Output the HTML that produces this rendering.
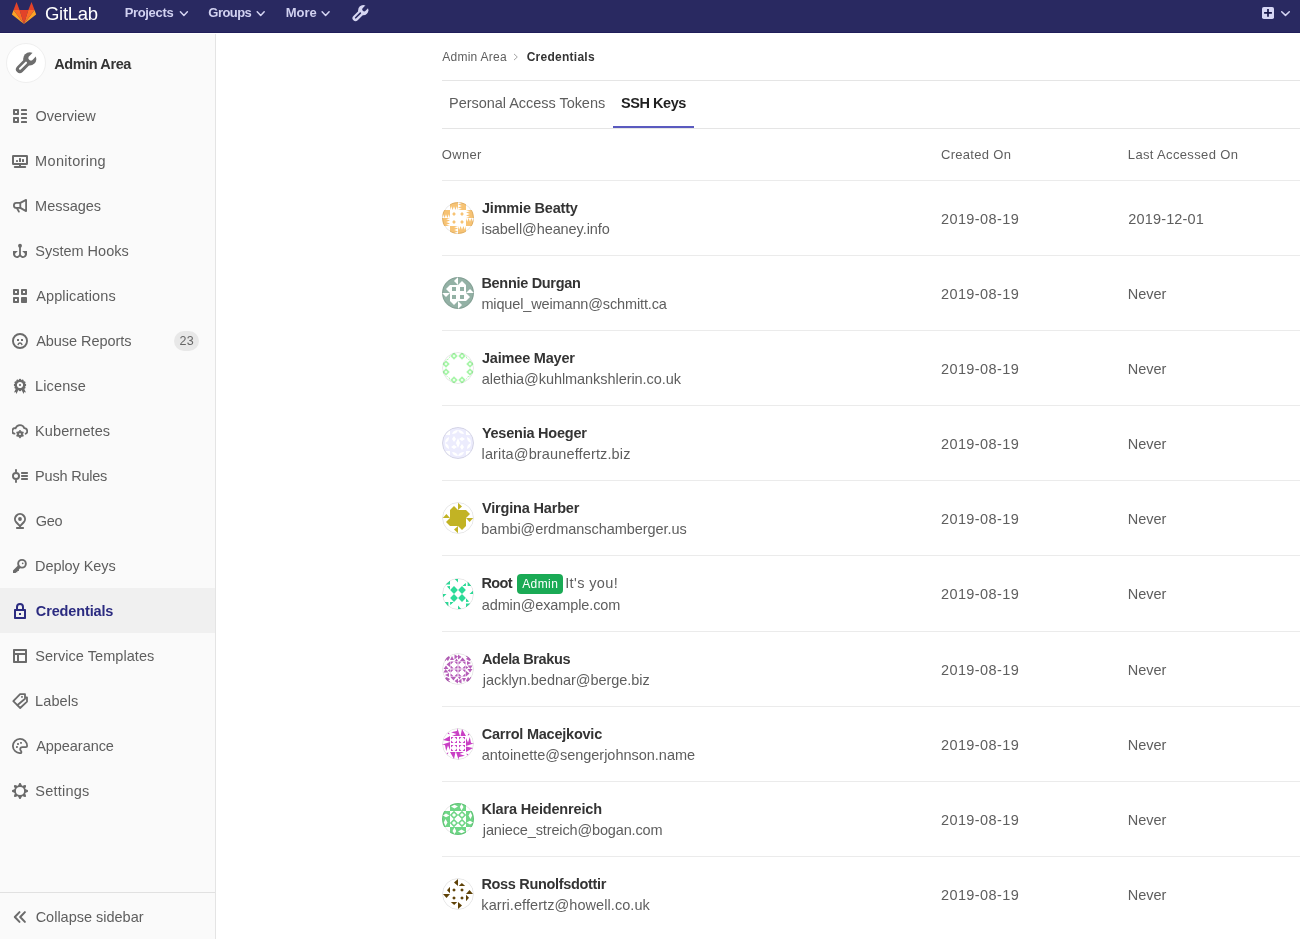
<!DOCTYPE html>
<html>
<head>
<meta charset="utf-8">
<title>Credentials · Admin Area · GitLab</title>
<style>
*{box-sizing:border-box;margin:0;padding:0}
html,body{width:1300px;height:940px;overflow:hidden;background:#fff}
body{font-family:"Liberation Sans",sans-serif;font-size:14px;color:#2e2e2e;position:relative}
#page{position:absolute;left:0;top:0;width:1300px;height:940px;will-change:transform}
.t{position:absolute;white-space:nowrap;line-height:20px}
.abs,.navbar,.sidebar,.hl,.row svg,.item,.item svg{position:absolute}
.navbar{left:0;top:0;width:1300px;height:33px;background:#292961;border-bottom:1px solid #201e5a}
.navbar svg{position:absolute}
.sidebar{left:0;top:34px;width:216px;height:905px;background:#fafafa;border-right:1px solid #e4e4e4}
.ctxav{position:absolute;left:6px;top:43px;width:40px;height:40px;border-radius:50%;background:#fff;border:1px solid #efefef}
.ctxav svg{position:absolute;left:7px;top:7px;color:#6e6e6e;fill:#6e6e6e}
.item{left:0;width:215px;height:45px;color:#6b6b6b}
.item svg{left:12px;top:15px;width:16px;height:16px;fill:currentColor}
.item.active{background:#f0f0f0;color:#2b2b80}
.pill{position:absolute;left:174px;top:331px;width:25px;height:20px;border-radius:10px;background:#e8e8e8}
.hl{height:1px;background:#e5e5e5}
.ul{position:absolute;left:613px;top:126px;width:81px;height:2px;background:#5a5abf}
.avt{position:absolute;left:442px;width:32px;height:32px;border-radius:50%;overflow:hidden}
.avt:after{content:"";box-sizing:border-box;position:absolute;left:0;top:0;width:32px;height:32px;border-radius:50%;border:1px solid rgba(0,0,0,.1)}
.avt svg{display:block}
.admin{position:absolute;left:517px;top:574px;width:46px;height:20px;border-radius:4px;background:#1aaa55}
</style>
</head>
<body>
<div id="page">
<div class="navbar">
<svg style="left:0;top:0" width="48" height="33" viewBox="0 0 48 33"><path fill="#e24329" d="M16.530 1.920L13.500 10.050H19.570zM31.530 1.920L28.340 10.050H34.570zM19.570 10.050H28.340L23.970 24.100z"/><path fill="#fc6d26" d="M13.500 10.050H19.570L23.970 24.100zM28.340 10.050H34.570L23.970 24.100z"/><path fill="#fca326" d="M11.900 14.520L13.500 10.050 23.970 24.100zM36.160 14.520L34.570 10.050 23.970 24.100z"/></svg>
<svg style="left:0;top:0" width="1300" height="33"><g fill="none" stroke="#d4d4f2" stroke-width="1.500" stroke-linecap="round" stroke-linejoin="round"><path d="M180.4 11.7L183.9 15.4 187.4 11.7"/><path d="M257.2 11.7L260.7 15.4 264.2 11.7"/><path d="M322.1 11.7L325.6 15.4 329.1 11.7"/><path d="M1281.7 11.7L1285.5 15.4 1289.3 11.7"/></g><rect x="1262" y="7" width="12" height="12" rx="1.800" fill="#d6d6f4"/><path d="M1264.100 12.050h7.800v1.700h-7.800zM1267.150 9h1.700v7.800h-1.700z" fill="#17174a"/></svg>
<svg style="left:350.700px;top:3.800px;color:#d6d6f2;fill:#d6d6f2" width="18.700" height="18.700" viewBox="0 0 16 16"><circle cx="10.500" cy="5.300" r="4.400"/><path d="M9.300 6.700L3.900 12.100" stroke="currentColor" stroke-width="5.200" stroke-linecap="round" fill="none"/><path d="M11.300 4.600L15.500 .400" stroke="#292961" stroke-width="3.300" stroke-linecap="round" fill="none"/><path d="M8 7.800L4 11.800" stroke="#292961" stroke-width="1.400" stroke-linecap="round" fill="none"/></svg>
</div>
<span class="t" id="brand" style="left:44.99px;top:4.29px;font-size:18.5px;color:#ffffff;letter-spacing:-0.29px">GitLab</span>
<span class="t" id="n1" style="left:124.63px;top:2.5px;font-size:13px;color:#d1d1f0;font-weight:bold;letter-spacing:-0.33px">Projects</span>
<span class="t" id="n2" style="left:208.35px;top:2.5px;font-size:13px;color:#d1d1f0;font-weight:bold;letter-spacing:-0.55px">Groups</span>
<span class="t" id="n3" style="left:285.7px;top:2.5px;font-size:13px;color:#d1d1f0;font-weight:bold;letter-spacing:0.01px">More</span>
<div class="sidebar"></div>
<div class="ctxav"><svg width="24" height="24" viewBox="0 0 16 16"><circle cx="10.500" cy="5.300" r="4.400"/><path d="M9.300 6.700L3.900 12.100" stroke="currentColor" stroke-width="5.200" stroke-linecap="round" fill="none"/><path d="M11.300 4.600L15.500 .400" stroke="#fff" stroke-width="3.300" stroke-linecap="round" fill="none"/><path d="M8 7.800L4 11.800" stroke="#fff" stroke-width="1.400" stroke-linecap="round" fill="none"/></svg></div>
<span class="t" id="ctx" style="left:54.14px;top:53.98px;font-size:14.5px;color:#343434;font-weight:bold;letter-spacing:-0.4px">Admin Area</span>
<div class="item" style="top:93px"><svg viewBox="0 0 16 16"><path fill-rule="evenodd" d="M1.8 1h4.4a.8.8 0 0 1 .8.8v4.4a.8.8 0 0 1-.8.8h-4.4a.8.8 0 0 1-.8-.8v-4.4a.8.8 0 0 1 .8-.8zM3 3v2h2v-2z"/><path fill-rule="evenodd" d="M1.8 9h4.4a.8.8 0 0 1 .8.8v4.4a.8.8 0 0 1-.8.8h-4.4a.8.8 0 0 1-.8-.8v-4.4a.8.8 0 0 1 .8-.8zM3 11v2h2v-2z"/><rect x="9" y="1" width="6" height="2" rx=".6"/><rect x="9" y="5" width="6" height="2" rx=".6"/><rect x="9" y="9" width="6" height="2" rx=".6"/><rect x="9" y="13" width="6" height="2" rx=".6"/></svg></div>
<span class="t" id="s0" style="left:35.59px;top:106.18px;font-size:14.5px;color:#5e5e5e;letter-spacing:-0.05px">Overview</span>
<div class="item" style="top:138px"><svg viewBox="0 0 16 16"><path fill-rule="evenodd" d="M1.200 2h13.600A1.200 1.200 0 0 1 16 3.200v7.600a1.200 1.200 0 0 1-1.200 1.200H9v1h4.200a.8.8 0 0 1 0 2H2.800a.8.8 0 0 1 0-2H7v-1H1.200A1.200 1.200 0 0 1 0 10.800v-7.600A1.200 1.200 0 0 1 1.200 2zM2 4v6h12V4z"/><rect x="4" y="7" width="2" height="2" rx=".4"/><rect x="7" y="5" width="2" height="4" rx=".6"/><rect x="10" y="6" width="2" height="3" rx=".6"/></svg></div>
<span class="t" id="s1" style="left:35.12px;top:151.18px;font-size:14.5px;color:#5e5e5e;letter-spacing:0.32px">Monitoring</span>
<div class="item" style="top:183px"><svg viewBox="0 0 16 16"><g fill="none" stroke="currentColor" stroke-width="1.800" stroke-linejoin="round" stroke-linecap="round"><path d="M8.300 4.900H4.400a2.500 2.500 0 0 0 0 5h3.900z"/><path d="M8.300 4.900L14.100 1.900v11.200L8.300 9.900"/><path d="M5 10.200l1.900 3.400"/></g></svg></div>
<span class="t" id="s2" style="left:35.12px;top:196.18px;font-size:14.5px;color:#5e5e5e;letter-spacing:-0.01px">Messages</span>
<div class="item" style="top:228px"><svg viewBox="0 0 16 16"><circle cx="8" cy="2.800" r="1.950"/><path d="M1 8h4.800L3.100 10.700c-.2 1.400.6 2.500 1.800 2.500 1.200 0 2.200-.9 2.200-2.200V4h1.800v7c0 1.300 1 2.200 2.200 2.200 1.200 0 2-1.100 1.800-2.500L10.200 8H15v3.100C15 13.300 13.300 15 11.100 15c-1.300 0-2.400-.6-3.100-1.500C7.300 14.400 6.200 15 4.900 15 2.700 15 1 13.300 1 11.100z"/></svg></div>
<span class="t" id="s3" style="left:35.25px;top:241.18px;font-size:14.5px;color:#5e5e5e">System Hooks</span>
<div class="item" style="top:273px"><svg viewBox="0 0 16 16"><path fill-rule="evenodd" d="M1.8 1h4.4a.8.8 0 0 1 .8.8v4.4a.8.8 0 0 1-.8.8h-4.4a.8.8 0 0 1-.8-.8v-4.4a.8.8 0 0 1 .8-.8zM3 3v2h2v-2z"/><path fill-rule="evenodd" d="M9.8 1h4.4a.8.8 0 0 1 .8.8v4.4a.8.8 0 0 1-.8.8h-4.4a.8.8 0 0 1-.8-.8v-4.4a.8.8 0 0 1 .8-.8zM11 3v2h2v-2z"/><path fill-rule="evenodd" d="M1.8 9h4.4a.8.8 0 0 1 .8.8v4.4a.8.8 0 0 1-.8.8h-4.4a.8.8 0 0 1-.8-.8v-4.4a.8.8 0 0 1 .8-.8zM3 11v2h2v-2z"/><rect x="9" y="9" width="6" height="6" rx=".8"/></svg></div>
<span class="t" id="s4" style="left:36.18px;top:286.18px;font-size:14.5px;color:#5e5e5e;letter-spacing:0.12px">Applications</span>
<div class="item" style="top:318px"><svg viewBox="0 0 16 16"><circle cx="8" cy="8" r="7.050" fill="none" stroke="currentColor" stroke-width="1.900"/><rect x="5" y="6" width="2" height="2" rx=".3"/><rect x="9" y="6" width="2" height="2" rx=".3"/><path d="M6.100 11.400a2 2 0 0 1 3.800 0" fill="none" stroke="currentColor" stroke-width="1.500" stroke-linecap="round"/></svg></div>
<span class="t" id="s5" style="left:36.18px;top:331.18px;font-size:14.5px;color:#5e5e5e;letter-spacing:-0.05px">Abuse Reports</span>
<div class="item" style="top:363px"><svg viewBox="0 0 16 16"><g transform="translate(8 7)"><rect x="-1.150" y="-6.150" width="2.300" height="3" rx="1" transform="rotate(0)"/><rect x="-1.150" y="-6.150" width="2.300" height="3" rx="1" transform="rotate(30)"/><rect x="-1.150" y="-6.150" width="2.300" height="3" rx="1" transform="rotate(60)"/><rect x="-1.150" y="-6.150" width="2.300" height="3" rx="1" transform="rotate(90)"/><rect x="-1.150" y="-6.150" width="2.300" height="3" rx="1" transform="rotate(120)"/><rect x="-1.150" y="-6.150" width="2.300" height="3" rx="1" transform="rotate(150)"/><rect x="-1.150" y="-6.150" width="2.300" height="3" rx="1" transform="rotate(180)"/><rect x="-1.150" y="-6.150" width="2.300" height="3" rx="1" transform="rotate(210)"/><rect x="-1.150" y="-6.150" width="2.300" height="3" rx="1" transform="rotate(240)"/><rect x="-1.150" y="-6.150" width="2.300" height="3" rx="1" transform="rotate(270)"/><rect x="-1.150" y="-6.150" width="2.300" height="3" rx="1" transform="rotate(300)"/><rect x="-1.150" y="-6.150" width="2.300" height="3" rx="1" transform="rotate(330)"/><path fill-rule="evenodd" d="M0-5.200a5.200 5.200 0 1 1 0 10.400a5.200 5.200 0 1 1 0-10.400zM0-3.100a3.100 3.100 0 1 0 0 6.200a3.100 3.100 0 1 0 0-6.200z"/><circle r="1.100"/></g><path d="M4.300 9.700L2 14.400l1.700-.3.700 1.800 2.500-4.900zM11.700 9.700l2.300 4.700-1.700-.3-.700 1.800-2.500-4.900z"/></svg></div>
<span class="t" id="s6" style="left:35.12px;top:376.18px;font-size:14.5px;color:#5e5e5e;letter-spacing:0.11px">License</span>
<div class="item" style="top:408px"><svg viewBox="0 0 16 16"><path d="M2.500 10.700A2.750 2.750 0 0 1 3.600 5.300 4.600 4.600 0 0 1 12.300 5.200 2.900 2.900 0 0 1 13.600 10.700" fill="none" stroke="currentColor" stroke-width="1.800" stroke-linecap="round"/><g transform="translate(8 11.100)"><path d="M-1.700-2.300L-.4-4.200h.8L1.700-2.300z" transform="rotate(0)"/><path d="M-1.700-2.300L-.4-4.200h.8L1.700-2.300z" transform="rotate(60)"/><path d="M-1.700-2.300L-.4-4.200h.8L1.700-2.300z" transform="rotate(120)"/><path d="M-1.700-2.300L-.4-4.200h.8L1.700-2.300z" transform="rotate(180)"/><path d="M-1.700-2.300L-.4-4.200h.8L1.700-2.300z" transform="rotate(240)"/><path d="M-1.700-2.300L-.4-4.200h.8L1.700-2.300z" transform="rotate(300)"/><path fill-rule="evenodd" d="M0-2.900a2.900 2.900 0 1 1 0 5.800a2.900 2.900 0 1 1 0-5.800zM-.8-.8v1.600h1.600v-1.600z"/></g></svg></div>
<span class="t" id="s7" style="left:35.12px;top:421.18px;font-size:14.5px;color:#5e5e5e;letter-spacing:0.09px">Kubernetes</span>
<div class="item" style="top:453px"><svg viewBox="0 0 16 16"><circle cx="4" cy="8" r="3.050" fill="none" stroke="currentColor" stroke-width="1.900"/><rect x="3.050" y="1" width="1.900" height="3.500" rx=".9"/><rect x="3.050" y="11.500" width="1.900" height="3.500" rx=".9"/><rect x="9" y="4" width="7" height="2" rx=".7"/><rect x="9" y="7" width="7" height="2" rx=".7"/><rect x="9" y="10" width="7" height="2" rx=".7"/></svg></div>
<span class="t" id="s8" style="left:35.12px;top:466.18px;font-size:14.5px;color:#5e5e5e;letter-spacing:-0.21px">Push Rules</span>
<div class="item" style="top:498px"><svg viewBox="0 0 16 16"><path d="M8 13.100L4.460 9.540A5 5 0 1 1 11.540 9.540z" fill="none" stroke="currentColor" stroke-width="2" stroke-linejoin="round"/><circle cx="8" cy="6" r="1.900"/><rect x="4" y="14" width="8" height="2" rx=".8"/><rect x="7.200" y="13" width="1.600" height="2"/></svg></div>
<span class="t" id="s9" style="left:35.66px;top:511.18px;font-size:14.5px;color:#5e5e5e;letter-spacing:-0.27px">Geo</span>
<div class="item" style="top:543px"><svg viewBox="0 0 16 16"><circle cx="10" cy="5.750" r="3.850" fill="none" stroke="currentColor" stroke-width="1.900"/><circle cx="10.700" cy="5.300" r=".85"/><path d="M6.200 7.300l2.400 2.400L6.900 11.400v1.500H5.400v1.300H3.900V15H1v-2.500z"/></svg></div>
<span class="t" id="s10" style="left:35.12px;top:556.18px;font-size:14.5px;color:#5e5e5e;letter-spacing:-0.08px">Deploy Keys</span>
<div class="item active" style="top:588px"><svg viewBox="0 0 16 16"><path fill-rule="evenodd" d="M4 6V4a4 4 0 0 1 8 0V6h1.200a.8.800 0 0 1 .8.800v8.400a.8.800 0 0 1-.8.800H2.800a.8.800 0 0 1-.8-.8V6.800a.8.800 0 0 1 .8-.8zM6 6h4V4a2 2 0 0 0-4 0zM4 8v6h8V8z"/><rect x="7" y="10" width="2" height="2" rx=".3"/></svg></div>
<span class="t" id="s11" style="left:35.83px;top:601.18px;font-size:14.5px;color:#2b2b80;font-weight:bold;letter-spacing:-0.14px">Credentials</span>
<div class="item" style="top:633px"><svg viewBox="0 0 16 16"><path fill-rule="evenodd" d="M1.800 1h12.400a.8.800 0 0 1 .8.800v12.400a.8.800 0 0 1-.8.800H1.800a.8.800 0 0 1-.8-.8V1.800a.8.800 0 0 1 .8-.8zM3 3v2h10V3zM3 7v6h2V7zM7 7v6h6V7z"/></svg></div>
<span class="t" id="s12" style="left:35.25px;top:646.18px;font-size:14.5px;color:#5e5e5e;letter-spacing:0.05px">Service Templates</span>
<div class="item" style="top:678px"><svg viewBox="0 0 16 16"><g fill="none" stroke="currentColor" stroke-width="1.800" stroke-linejoin="round" stroke-linecap="round"><path d="M8.100 1.100H13v4.600L5.300 12.200 1.300 8.200z"/><path d="M14 4.300h1v4.400L8.200 15 5.600 12.400"/></g><rect x="9.100" y="3.100" width="1.700" height="1.700" rx=".3"/></svg></div>
<span class="t" id="s13" style="left:35.12px;top:691.18px;font-size:14.5px;color:#5e5e5e;letter-spacing:0.07px">Labels</span>
<div class="item" style="top:723px"><svg viewBox="0 0 16 16"><path d="M8.300 15.100A7.100 7.100 0 1 1 15.100 8c0 .7-.5 1.100-1.200 1.100h-3.400c-1.300 0-2.300 1-2.300 2.200 0 1 .8 1.500 1.100 2.300.3.800-.1 1.500-1 1.500z" fill="none" stroke="currentColor" stroke-width="1.800" stroke-linejoin="round"/><rect x="5.100" y="5.100" width="1.800" height="1.800" rx=".3"/><rect x="8.100" y="4" width="1.800" height="1.800" rx=".3"/><rect x="4" y="8.100" width="1.800" height="1.800" rx=".3"/></svg></div>
<span class="t" id="s14" style="left:36.18px;top:736.18px;font-size:14.5px;color:#5e5e5e;letter-spacing:-0.05px">Appearance</span>
<div class="item" style="top:768px"><svg viewBox="0 0 16 16"><g transform="translate(8 8)"><path d="M-2.100-5L-.9-7.600a1 1 0 0 1 1.800 0L2.100-5z" transform="rotate(0)"/><path d="M-2.100-5L-.9-7.600a1 1 0 0 1 1.800 0L2.100-5z" transform="rotate(45)"/><path d="M-2.100-5L-.9-7.600a1 1 0 0 1 1.800 0L2.100-5z" transform="rotate(90)"/><path d="M-2.100-5L-.9-7.600a1 1 0 0 1 1.800 0L2.100-5z" transform="rotate(135)"/><path d="M-2.100-5L-.9-7.600a1 1 0 0 1 1.800 0L2.100-5z" transform="rotate(180)"/><path d="M-2.100-5L-.9-7.600a1 1 0 0 1 1.800 0L2.100-5z" transform="rotate(225)"/><path d="M-2.100-5L-.9-7.600a1 1 0 0 1 1.800 0L2.100-5z" transform="rotate(270)"/><path d="M-2.100-5L-.9-7.600a1 1 0 0 1 1.800 0L2.100-5z" transform="rotate(315)"/><path fill-rule="evenodd" d="M0-5.800a5.800 5.800 0 1 1 0 11.600a5.800 5.800 0 1 1 0-11.600zM0-4.100a4.100 4.100 0 1 0 0 8.200a4.100 4.100 0 1 0 0-8.200z"/></g></svg></div>
<span class="t" id="s15" style="left:35.25px;top:781.18px;font-size:14.5px;color:#5e5e5e;letter-spacing:0.23px">Settings</span>
<div class="pill"></div><span class="t" id="badge" style="left:179.45px;top:330.97px;font-size:12.5px;color:#666;letter-spacing:0.3px">23</span>
<div class="hl" style="left:0;top:892px;width:215px;background:#e1e1e1"></div>
<svg class="abs" style="left:12px;top:909px;color:#6b6b6b" width="16" height="16" viewBox="0 0 16 16"><path d="M7.500 3.100L2.800 8l4.700 4.900M12.900 3.100L8.200 8l4.700 4.900" fill="none" stroke="currentColor" stroke-width="2" stroke-linecap="round" stroke-linejoin="round"/></svg>
<span class="t" id="collapse" style="left:35.66px;top:907.28px;font-size:14.5px;color:#5e5e5e;letter-spacing:-0.01px">Collapse sidebar</span>
<span class="t" id="bc1" style="left:442.22px;top:46.84px;font-size:12px;color:#5e5e5e;letter-spacing:0.26px">Admin Area</span>
<svg class="abs" style="left:512px;top:52px" width="8" height="10" viewBox="0 0 8 10"><path d="M2.300 2.200L5.300 5 2.300 7.800" fill="none" stroke="#a3a3a3" stroke-width="1" stroke-linecap="round" stroke-linejoin="round"/></svg>
<span class="t" id="bc2" style="left:526.67px;top:46.84px;font-size:12px;color:#343434;font-weight:bold;letter-spacing:0.26px">Credentials</span>
<div class="hl" style="left:442px;top:80px;width:858px"></div>
<span class="t" id="tab1" style="left:449.12px;top:92.98px;font-size:14.5px;color:#5e5e5e;letter-spacing:-0.04px">Personal Access Tokens</span><span class="t" id="tab2" style="left:620.97px;top:92.98px;font-size:14.5px;color:#1f1f1f;font-weight:bold;letter-spacing:-0.45px">SSH Keys</span>
<div class="hl" style="left:442px;top:128px;width:858px"></div><div class="ul"></div>
<span class="t" id="h1" style="left:441.79px;top:144.5px;font-size:13px;color:#5e5e5e;letter-spacing:0.33px">Owner</span><span class="t" id="h2" style="left:940.98px;top:144.5px;font-size:13px;color:#5e5e5e;letter-spacing:0.3px">Created On</span><span class="t" id="h3" style="left:1127.85px;top:144.5px;font-size:13px;color:#5e5e5e;letter-spacing:0.35px">Last Accessed On</span>
<div class="hl" style="left:442px;top:180px;width:858px;background:#ebebeb"></div>
<div class="avt" style="top:202px"><svg width="32" height="32" viewBox="0 0 32 32"><rect width="32" height="32" fill="#fff"/><g fill="#f7c374"><g transform="translate(8 0) rotate(0 4 4)"><path d="M0 0h8v8L6.800 4.200 5.400 8 4 4.200 2.600 8 1.200 4.200 0 8z"/></g><g transform="translate(24 8) rotate(90 4 4)"><path d="M0 0h8v8L6.800 4.200 5.400 8 4 4.200 2.600 8 1.200 4.200 0 8z"/></g><g transform="translate(16 24) rotate(180 4 4)"><path d="M0 0h8v8L6.800 4.200 5.400 8 4 4.200 2.600 8 1.200 4.200 0 8z"/></g><g transform="translate(0 16) rotate(270 4 4)"><path d="M0 0h8v8L6.800 4.200 5.400 8 4 4.200 2.600 8 1.200 4.200 0 8z"/></g><g transform="translate(16 0) rotate(90 4 4)"><path d="M0 0h8v8L6.800 4.200 5.400 8 4 4.200 2.600 8 1.200 4.200 0 8z"/></g><g transform="translate(24 16) rotate(180 4 4)"><path d="M0 0h8v8L6.800 4.200 5.400 8 4 4.200 2.600 8 1.200 4.200 0 8z"/></g><g transform="translate(8 24) rotate(270 4 4)"><path d="M0 0h8v8L6.800 4.200 5.400 8 4 4.200 2.600 8 1.200 4.200 0 8z"/></g><g transform="translate(0 8) rotate(360 4 4)"><path d="M0 0h8v8L6.800 4.200 5.400 8 4 4.200 2.600 8 1.200 4.200 0 8z"/></g><g transform="translate(8 8) rotate(0 4 4)"><path d="M4 2.1L5.9 4 4 5.9 2.1 4z"/></g><g transform="translate(16 8) rotate(90 4 4)"><path d="M4 2.1L5.9 4 4 5.9 2.1 4z"/></g><g transform="translate(16 16) rotate(180 4 4)"><path d="M4 2.1L5.9 4 4 5.9 2.1 4z"/></g><g transform="translate(8 16) rotate(270 4 4)"><path d="M4 2.1L5.9 4 4 5.9 2.1 4z"/></g></g></svg></div>
<span class="t" id="r0n" style="left:481.99px;top:197.98px;font-size:14.5px;color:#343434;font-weight:bold;letter-spacing:-0.2px">Jimmie Beatty</span>
<span class="t" id="r0e" style="left:481.49px;top:218.98px;font-size:14.5px;color:#5e5e5e;letter-spacing:-0.08px">isabell@heaney.info</span><span class="t" id="r0c" style="left:940.94px;top:208.98px;font-size:14.5px;color:#5e5e5e;letter-spacing:0.41px">2019-08-19</span><span class="t" id="r0l" style="left:1128.35px;top:208.98px;font-size:14.5px;color:#5e5e5e;letter-spacing:0.14px">2019-12-01</span>
<div class="hl" style="left:442px;top:255px;width:858px;background:#ebebeb"></div>
<div class="avt" style="top:277px"><svg width="32" height="32" viewBox="0 0 32 32"><rect width="32" height="32" fill="#93b1a5"/><g fill="#fff"><rect x="8" y="8" width="16" height="16"/><g transform="translate(8 0) rotate(0 4 4)"><path d="M8 0v8L4 4z"/></g><g transform="translate(24 8) rotate(90 4 4)"><path d="M8 0v8L4 4z"/></g><g transform="translate(16 24) rotate(180 4 4)"><path d="M8 0v8L4 4z"/></g><g transform="translate(0 16) rotate(270 4 4)"><path d="M8 0v8L4 4z"/></g><g transform="translate(16 0) rotate(0 4 4)"><path d="M0 8h8L4 4z"/></g><g transform="translate(24 16) rotate(90 4 4)"><path d="M0 8h8L4 4z"/></g><g transform="translate(8 24) rotate(180 4 4)"><path d="M0 8h8L4 4z"/></g><g transform="translate(0 8) rotate(270 4 4)"><path d="M0 8h8L4 4z"/></g><g transform="translate(0 0) rotate(0 4 4)"><path d="M4 2.4L5.6 4 4 5.6 2.4 4z"/></g><g transform="translate(24 0) rotate(90 4 4)"><path d="M4 2.4L5.6 4 4 5.6 2.4 4z"/></g><g transform="translate(24 24) rotate(180 4 4)"><path d="M4 2.4L5.6 4 4 5.6 2.4 4z"/></g><g transform="translate(0 24) rotate(270 4 4)"><path d="M4 2.4L5.6 4 4 5.6 2.4 4z"/></g><g fill="#93b1a5"><g transform="translate(8 8) rotate(0 4 4)"><rect x="2" y="2" width="4" height="4"/></g><g transform="translate(16 8) rotate(90 4 4)"><rect x="2" y="2" width="4" height="4"/></g><g transform="translate(16 16) rotate(180 4 4)"><rect x="2" y="2" width="4" height="4"/></g><g transform="translate(8 16) rotate(270 4 4)"><rect x="2" y="2" width="4" height="4"/></g></g></g></svg></div>
<span class="t" id="r1n" style="left:481.45px;top:272.98px;font-size:14.5px;color:#343434;font-weight:bold;letter-spacing:-0.31px">Bennie Durgan</span>
<span class="t" id="r1e" style="left:481.42px;top:293.98px;font-size:14.5px;color:#5e5e5e;letter-spacing:-0.14px">miquel_weimann@schmitt.ca</span><span class="t" id="r1c" style="left:940.94px;top:283.98px;font-size:14.5px;color:#5e5e5e;letter-spacing:0.41px">2019-08-19</span><span class="t" id="r1l" style="left:1127.78px;top:283.98px;font-size:14.5px;color:#5e5e5e;letter-spacing:-0.04px">Never</span>
<div class="hl" style="left:442px;top:330px;width:858px;background:#ebebeb"></div>
<div class="avt" style="top:352px"><svg width="32" height="32" viewBox="0 0 32 32"><rect width="32" height="32" fill="#fff"/><g fill="#a9f5aa"><g transform="translate(8 0) rotate(0 4 4)"><path fill-rule="evenodd" d="M4 .2L7.800 4 4 7.800 .2 4zM4 2.700L2.700 4 4 5.300 5.300 4z"/></g><g transform="translate(24 8) rotate(90 4 4)"><path fill-rule="evenodd" d="M4 .2L7.800 4 4 7.800 .2 4zM4 2.700L2.700 4 4 5.300 5.300 4z"/></g><g transform="translate(16 24) rotate(180 4 4)"><path fill-rule="evenodd" d="M4 .2L7.800 4 4 7.800 .2 4zM4 2.700L2.700 4 4 5.300 5.300 4z"/></g><g transform="translate(0 16) rotate(270 4 4)"><path fill-rule="evenodd" d="M4 .2L7.800 4 4 7.800 .2 4zM4 2.700L2.700 4 4 5.300 5.300 4z"/></g><g transform="translate(16 0) rotate(0 4 4)"><path fill-rule="evenodd" d="M4 .2L7.800 4 4 7.800 .2 4zM4 2.700L2.700 4 4 5.300 5.300 4z"/></g><g transform="translate(24 16) rotate(90 4 4)"><path fill-rule="evenodd" d="M4 .2L7.800 4 4 7.800 .2 4zM4 2.700L2.700 4 4 5.300 5.300 4z"/></g><g transform="translate(8 24) rotate(180 4 4)"><path fill-rule="evenodd" d="M4 .2L7.800 4 4 7.800 .2 4zM4 2.700L2.700 4 4 5.300 5.300 4z"/></g><g transform="translate(0 8) rotate(270 4 4)"><path fill-rule="evenodd" d="M4 .2L7.800 4 4 7.800 .2 4zM4 2.700L2.700 4 4 5.300 5.300 4z"/></g><g transform="translate(0 0) rotate(0 4 4)"><path d="M4 8l4-2.500V8zM8 4L6 8h2z"/></g><g transform="translate(24 0) rotate(90 4 4)"><path d="M4 8l4-2.500V8zM8 4L6 8h2z"/></g><g transform="translate(24 24) rotate(180 4 4)"><path d="M4 8l4-2.500V8zM8 4L6 8h2z"/></g><g transform="translate(0 24) rotate(270 4 4)"><path d="M4 8l4-2.500V8zM8 4L6 8h2z"/></g></g></svg></div>
<span class="t" id="r2n" style="left:481.99px;top:347.98px;font-size:14.5px;color:#343434;font-weight:bold;letter-spacing:-0.19px">Jaimee Mayer</span>
<span class="t" id="r2e" style="left:481.78px;top:368.98px;font-size:14.5px;color:#5e5e5e;letter-spacing:-0.06px">alethia@kuhlmankshlerin.co.uk</span><span class="t" id="r2c" style="left:940.94px;top:358.98px;font-size:14.5px;color:#5e5e5e;letter-spacing:0.41px">2019-08-19</span><span class="t" id="r2l" style="left:1127.78px;top:358.98px;font-size:14.5px;color:#5e5e5e;letter-spacing:-0.04px">Never</span>
<div class="hl" style="left:442px;top:405px;width:858px;background:#ebebeb"></div>
<div class="avt" style="top:427px"><svg width="32" height="32" viewBox="0 0 32 32"><rect width="32" height="32" fill="#ececfd"/><g fill="#fff"><g transform="translate(8 8) rotate(0 4 4)"><path d="M4 1L6 4 4 7 2 4z"/></g><g transform="translate(16 8) rotate(90 4 4)"><path d="M4 1L6 4 4 7 2 4z"/></g><g transform="translate(16 16) rotate(180 4 4)"><path d="M4 1L6 4 4 7 2 4z"/></g><g transform="translate(8 16) rotate(270 4 4)"><path d="M4 1L6 4 4 7 2 4z"/></g><g transform="translate(8 0) rotate(0 4 4)"><path d="M8 3c-3 0-5 1-6 4 3 0 5-1 6-4z"/></g><g transform="translate(24 8) rotate(90 4 4)"><path d="M8 3c-3 0-5 1-6 4 3 0 5-1 6-4z"/></g><g transform="translate(16 24) rotate(180 4 4)"><path d="M8 3c-3 0-5 1-6 4 3 0 5-1 6-4z"/></g><g transform="translate(0 16) rotate(270 4 4)"><path d="M8 3c-3 0-5 1-6 4 3 0 5-1 6-4z"/></g><g transform="translate(16 0) rotate(0 4 4)"><path d="M0 3c3 0 5 1 6 4-3 0-5-1-6-4z"/></g><g transform="translate(24 16) rotate(90 4 4)"><path d="M0 3c3 0 5 1 6 4-3 0-5-1-6-4z"/></g><g transform="translate(8 24) rotate(180 4 4)"><path d="M0 3c3 0 5 1 6 4-3 0-5-1-6-4z"/></g><g transform="translate(0 8) rotate(270 4 4)"><path d="M0 3c3 0 5 1 6 4-3 0-5-1-6-4z"/></g><g transform="translate(0 0) rotate(0 4 4)"><path d="M3 8l5-5v5z"/></g><g transform="translate(24 0) rotate(90 4 4)"><path d="M3 8l5-5v5z"/></g><g transform="translate(24 24) rotate(180 4 4)"><path d="M3 8l5-5v5z"/></g><g transform="translate(0 24) rotate(270 4 4)"><path d="M3 8l5-5v5z"/></g><path d="M16 11l2 5-2 5-2-5z"/></g></svg></div>
<span class="t" id="r3n" style="left:481.88px;top:422.98px;font-size:14.5px;color:#343434;font-weight:bold;letter-spacing:-0.23px">Yesenia Hoeger</span>
<span class="t" id="r3e" style="left:481.53px;top:443.98px;font-size:14.5px;color:#5e5e5e;letter-spacing:0.14px">larita@brauneffertz.biz</span><span class="t" id="r3c" style="left:940.94px;top:433.98px;font-size:14.5px;color:#5e5e5e;letter-spacing:0.41px">2019-08-19</span><span class="t" id="r3l" style="left:1127.78px;top:433.98px;font-size:14.5px;color:#5e5e5e;letter-spacing:-0.04px">Never</span>
<div class="hl" style="left:442px;top:480px;width:858px;background:#ebebeb"></div>
<div class="avt" style="top:502px"><svg width="32" height="32" viewBox="0 0 32 32"><rect width="32" height="32" fill="#fff"/><g fill="#c2b324"><rect x="8" y="8" width="16" height="16"/><g transform="translate(8 0) rotate(0 4 4)"><path d="M0 8h8L4 4z"/></g><g transform="translate(24 8) rotate(90 4 4)"><path d="M0 8h8L4 4z"/></g><g transform="translate(16 24) rotate(180 4 4)"><path d="M0 8h8L4 4z"/></g><g transform="translate(0 16) rotate(270 4 4)"><path d="M0 8h8L4 4z"/></g><g transform="translate(16 0) rotate(0 4 4)"><path d="M0 .800V8L4 4.400z"/></g><g transform="translate(24 16) rotate(90 4 4)"><path d="M0 .800V8L4 4.400z"/></g><g transform="translate(8 24) rotate(180 4 4)"><path d="M0 .800V8L4 4.400z"/></g><g transform="translate(0 8) rotate(270 4 4)"><path d="M0 .800V8L4 4.400z"/></g></g></svg></div>
<span class="t" id="r4n" style="left:482.05px;top:497.98px;font-size:14.5px;color:#343434;font-weight:bold;letter-spacing:-0.18px">Virgina Harber</span>
<span class="t" id="r4e" style="left:481.34px;top:518.98px;font-size:14.5px;color:#5e5e5e;letter-spacing:-0.04px">bambi@erdmanschamberger.us</span><span class="t" id="r4c" style="left:940.94px;top:508.98px;font-size:14.5px;color:#5e5e5e;letter-spacing:0.41px">2019-08-19</span><span class="t" id="r4l" style="left:1127.78px;top:508.98px;font-size:14.5px;color:#5e5e5e;letter-spacing:-0.04px">Never</span>
<div class="hl" style="left:442px;top:555px;width:858px;background:#ebebeb"></div>
<div class="avt" style="top:578px"><svg width="32" height="32" viewBox="0 0 32 32"><rect width="32" height="32" fill="#fff"/><g fill="#2cdb98"><g transform="translate(8 8) rotate(0 4 4)"><path d="M4 0.10000000000000009L7.9 4 4 7.9 0.10000000000000009 4z"/></g><g transform="translate(16 8) rotate(90 4 4)"><path d="M4 0.10000000000000009L7.9 4 4 7.9 0.10000000000000009 4z"/></g><g transform="translate(16 16) rotate(180 4 4)"><path d="M4 0.10000000000000009L7.9 4 4 7.9 0.10000000000000009 4z"/></g><g transform="translate(8 16) rotate(270 4 4)"><path d="M4 0.10000000000000009L7.9 4 4 7.9 0.10000000000000009 4z"/></g><g transform="translate(8 0) rotate(0 4 4)"><path d="M4.800 1h3.200v3.500z"/></g><g transform="translate(24 8) rotate(90 4 4)"><path d="M4.800 1h3.200v3.500z"/></g><g transform="translate(16 24) rotate(180 4 4)"><path d="M4.800 1h3.200v3.500z"/></g><g transform="translate(0 16) rotate(270 4 4)"><path d="M4.800 1h3.200v3.500z"/></g><g transform="translate(16 0) rotate(0 4 4)"><path d="M4.600 8L7.600 5.200 8 8z"/></g><g transform="translate(24 16) rotate(90 4 4)"><path d="M4.600 8L7.600 5.200 8 8z"/></g><g transform="translate(8 24) rotate(180 4 4)"><path d="M4.600 8L7.600 5.200 8 8z"/></g><g transform="translate(0 8) rotate(270 4 4)"><path d="M4.600 8L7.600 5.200 8 8z"/></g><g transform="translate(0 0) rotate(0 4 4)"><path d="M3.600 6.400L8 2.800v3.600z"/></g><g transform="translate(24 0) rotate(90 4 4)"><path d="M3.600 6.400L8 2.800v3.600z"/></g><g transform="translate(24 24) rotate(180 4 4)"><path d="M3.600 6.400L8 2.800v3.600z"/></g><g transform="translate(0 24) rotate(270 4 4)"><path d="M3.600 6.400L8 2.800v3.600z"/></g><g transform="translate(0 8) rotate(0 4 4)"><path d="M5 .400h3v3z"/></g><g transform="translate(16 0) rotate(90 4 4)"><path d="M5 .400h3v3z"/></g><g transform="translate(24 16) rotate(180 4 4)"><path d="M5 .400h3v3z"/></g><g transform="translate(8 24) rotate(270 4 4)"><path d="M5 .400h3v3z"/></g></g></svg></div>
<span class="t" id="r5n" style="left:481.45px;top:572.98px;font-size:14.5px;color:#343434;font-weight:bold;letter-spacing:-0.63px">Root</span>
<div class="admin"></div><span class="t" id="adm" style="left:522.2px;top:573.84px;font-size:12px;color:#ffffff;letter-spacing:0.41px">Admin</span><span class="t" id="you" style="left:565.19px;top:572.98px;font-size:14.5px;color:#5e5e5e;letter-spacing:0.38px">It's you!</span>
<span class="t" id="r5e" style="left:481.78px;top:594.98px;font-size:14.5px;color:#5e5e5e;letter-spacing:-0.12px">admin@example.com</span><span class="t" id="r5c" style="left:940.94px;top:583.98px;font-size:14.5px;color:#5e5e5e;letter-spacing:0.41px">2019-08-19</span><span class="t" id="r5l" style="left:1127.78px;top:583.98px;font-size:14.5px;color:#5e5e5e;letter-spacing:-0.04px">Never</span>
<div class="hl" style="left:442px;top:631px;width:858px;background:#ebebeb"></div>
<div class="avt" style="top:653px"><svg width="32" height="32" viewBox="0 0 32 32"><rect width="32" height="32" fill="#fff"/><g fill="#b65fb9"><g transform="translate(8 8) rotate(0 4 4)"><path d="M.5 .5h3.300L.5 3.800zM7.500 .5v3.300L4.200 .5zM7.500 7.500H4.200L7.500 4.200zM.5 7.500V4.200L3.800 7.500z"/></g><g transform="translate(16 8) rotate(90 4 4)"><path d="M.5 .5h3.300L.5 3.800zM7.500 .5v3.300L4.200 .5zM7.500 7.500H4.200L7.500 4.200zM.5 7.500V4.200L3.800 7.500z"/></g><g transform="translate(16 16) rotate(180 4 4)"><path d="M.5 .5h3.300L.5 3.800zM7.500 .5v3.300L4.200 .5zM7.500 7.500H4.200L7.500 4.200zM.5 7.500V4.200L3.800 7.500z"/></g><g transform="translate(8 16) rotate(270 4 4)"><path d="M.5 .5h3.300L.5 3.800zM7.500 .5v3.300L4.200 .5zM7.500 7.500H4.200L7.500 4.200zM.5 7.500V4.200L3.800 7.500z"/></g><g transform="translate(8 0) rotate(0 4 4)"><path d="M4.500 1.500l3.500 2L4.500 6.500zM4 7L2 3 0 7zM5 8l1.500-2.500L8 8z"/></g><g transform="translate(24 8) rotate(90 4 4)"><path d="M4.500 1.500l3.500 2L4.500 6.500zM4 7L2 3 0 7zM5 8l1.500-2.500L8 8z"/></g><g transform="translate(16 24) rotate(180 4 4)"><path d="M4.500 1.500l3.500 2L4.500 6.500zM4 7L2 3 0 7zM5 8l1.500-2.500L8 8z"/></g><g transform="translate(0 16) rotate(270 4 4)"><path d="M4.500 1.500l3.500 2L4.500 6.500zM4 7L2 3 0 7zM5 8l1.500-2.500L8 8z"/></g><g transform="translate(16 0) rotate(0 4 4)"><path d="M0 1.500l3.500 2.500L0 6.500zM4.500 4.500L7.500 8H2z"/></g><g transform="translate(24 16) rotate(90 4 4)"><path d="M0 1.500l3.500 2.500L0 6.500zM4.500 4.500L7.500 8H2z"/></g><g transform="translate(8 24) rotate(180 4 4)"><path d="M0 1.500l3.500 2.500L0 6.500zM4.500 4.500L7.500 8H2z"/></g><g transform="translate(0 8) rotate(270 4 4)"><path d="M0 1.500l3.500 2.500L0 6.500zM4.500 4.500L7.500 8H2z"/></g><g transform="translate(0 0) rotate(0 4 4)"><path d="M5 1.500L8 4.500 6 8 2.500 5zM2 7l1.500-1.500L4 8z"/></g><g transform="translate(24 0) rotate(90 4 4)"><path d="M5 1.500L8 4.500 6 8 2.500 5zM2 7l1.500-1.500L4 8z"/></g><g transform="translate(24 24) rotate(180 4 4)"><path d="M5 1.500L8 4.500 6 8 2.500 5zM2 7l1.500-1.500L4 8z"/></g><g transform="translate(0 24) rotate(270 4 4)"><path d="M5 1.500L8 4.500 6 8 2.500 5zM2 7l1.500-1.500L4 8z"/></g></g></svg></div>
<span class="t" id="r6n" style="left:481.89px;top:648.98px;font-size:14.5px;color:#343434;font-weight:bold;letter-spacing:-0.36px">Adela Brakus</span>
<span class="t" id="r6e" style="left:482.81px;top:669.98px;font-size:14.5px;color:#5e5e5e;letter-spacing:-0.04px">jacklyn.bednar@berge.biz</span><span class="t" id="r6c" style="left:940.94px;top:659.98px;font-size:14.5px;color:#5e5e5e;letter-spacing:0.41px">2019-08-19</span><span class="t" id="r6l" style="left:1127.78px;top:659.98px;font-size:14.5px;color:#5e5e5e;letter-spacing:-0.04px">Never</span>
<div class="hl" style="left:442px;top:706px;width:858px;background:#ebebeb"></div>
<div class="avt" style="top:728px"><svg width="32" height="32" viewBox="0 0 32 32"><rect width="32" height="32" fill="#fff"/><g fill="#c940c4"><g transform="translate(8 8) rotate(0 4 4)"><path d="M1 1h2.500L1 3.500zM7 1v2.500L4.500 1zM7 7H4.500L7 4.500zM1 7V4.500L3.500 7z"/></g><g transform="translate(16 8) rotate(90 4 4)"><path d="M1 1h2.500L1 3.500zM7 1v2.500L4.500 1zM7 7H4.500L7 4.500zM1 7V4.500L3.500 7z"/></g><g transform="translate(16 16) rotate(180 4 4)"><path d="M1 1h2.500L1 3.500zM7 1v2.500L4.500 1zM7 7H4.500L7 4.500zM1 7V4.500L3.500 7z"/></g><g transform="translate(8 16) rotate(270 4 4)"><path d="M1 1h2.500L1 3.500zM7 1v2.500L4.500 1zM7 7H4.500L7 4.500zM1 7V4.500L3.500 7z"/></g><g transform="translate(8 0) rotate(0 4 4)"><path d="M8 0v8H2L6.500 6 1 4.200 6.800 3z"/></g><g transform="translate(24 8) rotate(90 4 4)"><path d="M8 0v8H2L6.500 6 1 4.200 6.800 3z"/></g><g transform="translate(16 24) rotate(180 4 4)"><path d="M8 0v8H2L6.500 6 1 4.200 6.800 3z"/></g><g transform="translate(0 16) rotate(270 4 4)"><path d="M8 0v8H2L6.500 6 1 4.200 6.800 3z"/></g><g transform="translate(16 0) rotate(0 4 4)"><path d="M0 8V2l2 6zM2.500 8L4 1l4 7z"/></g><g transform="translate(24 16) rotate(90 4 4)"><path d="M0 8V2l2 6zM2.500 8L4 1l4 7z"/></g><g transform="translate(8 24) rotate(180 4 4)"><path d="M0 8V2l2 6zM2.500 8L4 1l4 7z"/></g><g transform="translate(0 8) rotate(270 4 4)"><path d="M0 8V2l2 6zM2.500 8L4 1l4 7z"/></g><g transform="translate(0 0) rotate(0 4 4)"><path d="M5.500 5.500l1.500-1 .5 2z"/></g><g transform="translate(24 0) rotate(90 4 4)"><path d="M5.500 5.500l1.500-1 .5 2z"/></g><g transform="translate(24 24) rotate(180 4 4)"><path d="M5.500 5.500l1.500-1 .5 2z"/></g><g transform="translate(0 24) rotate(270 4 4)"><path d="M5.500 5.500l1.500-1 .5 2z"/></g></g></svg></div>
<span class="t" id="r7n" style="left:481.8px;top:723.98px;font-size:14.5px;color:#343434;font-weight:bold;letter-spacing:-0.23px">Carrol Macejkovic</span>
<span class="t" id="r7e" style="left:481.78px;top:744.98px;font-size:14.5px;color:#5e5e5e;letter-spacing:-0.02px">antoinette@sengerjohnson.name</span><span class="t" id="r7c" style="left:940.94px;top:734.98px;font-size:14.5px;color:#5e5e5e;letter-spacing:0.41px">2019-08-19</span><span class="t" id="r7l" style="left:1127.78px;top:734.98px;font-size:14.5px;color:#5e5e5e;letter-spacing:-0.04px">Never</span>
<div class="hl" style="left:442px;top:781px;width:858px;background:#ebebeb"></div>
<div class="avt" style="top:803px"><svg width="32" height="32" viewBox="0 0 32 32"><rect width="32" height="32" fill="#fff"/><g fill="#6fd686"><g transform="translate(8 0) rotate(0 4 4)"><path fill-rule="evenodd" d="M0 0h8v8H0zM1 3.500L4.500 1.800 8 3.500 4.500 5.500z"/></g><g transform="translate(24 8) rotate(90 4 4)"><path fill-rule="evenodd" d="M0 0h8v8H0zM1 3.500L4.500 1.800 8 3.500 4.500 5.500z"/></g><g transform="translate(16 24) rotate(180 4 4)"><path fill-rule="evenodd" d="M0 0h8v8H0zM1 3.500L4.500 1.800 8 3.500 4.500 5.500z"/></g><g transform="translate(0 16) rotate(270 4 4)"><path fill-rule="evenodd" d="M0 0h8v8H0zM1 3.500L4.500 1.800 8 3.500 4.500 5.500z"/></g><g transform="translate(16 0) rotate(0 4 4)"><path fill-rule="evenodd" d="M0 0h8v8H0zM3.500 .800L5.500 4 3.500 7.500 1.800 4z"/></g><g transform="translate(24 16) rotate(90 4 4)"><path fill-rule="evenodd" d="M0 0h8v8H0zM3.500 .800L5.500 4 3.500 7.500 1.800 4z"/></g><g transform="translate(8 24) rotate(180 4 4)"><path fill-rule="evenodd" d="M0 0h8v8H0zM3.500 .800L5.500 4 3.500 7.500 1.800 4z"/></g><g transform="translate(0 8) rotate(270 4 4)"><path fill-rule="evenodd" d="M0 0h8v8H0zM3.500 .800L5.500 4 3.500 7.500 1.800 4z"/></g><g transform="translate(8 8) rotate(0 4 4)"><path fill-rule="evenodd" d="M4 -.2L8.200 4 4 8.200 -.2 4zM4 1.900L1.900 4 4 6.100 6.100 4z"/></g><g transform="translate(16 8) rotate(90 4 4)"><path fill-rule="evenodd" d="M4 -.2L8.200 4 4 8.200 -.2 4zM4 1.900L1.900 4 4 6.100 6.100 4z"/></g><g transform="translate(16 16) rotate(180 4 4)"><path fill-rule="evenodd" d="M4 -.2L8.200 4 4 8.200 -.2 4zM4 1.900L1.900 4 4 6.100 6.100 4z"/></g><g transform="translate(8 16) rotate(270 4 4)"><path fill-rule="evenodd" d="M4 -.2L8.200 4 4 8.200 -.2 4zM4 1.900L1.900 4 4 6.100 6.100 4z"/></g></g></svg></div>
<span class="t" id="r8n" style="left:481.45px;top:798.98px;font-size:14.5px;color:#343434;font-weight:bold;letter-spacing:-0.17px">Klara Heidenreich</span>
<span class="t" id="r8e" style="left:482.81px;top:819.98px;font-size:14.5px;color:#5e5e5e;letter-spacing:-0.14px">janiece_streich@bogan.com</span><span class="t" id="r8c" style="left:940.94px;top:809.98px;font-size:14.5px;color:#5e5e5e;letter-spacing:0.41px">2019-08-19</span><span class="t" id="r8l" style="left:1127.78px;top:809.98px;font-size:14.5px;color:#5e5e5e;letter-spacing:-0.04px">Never</span>
<div class="hl" style="left:442px;top:856px;width:858px;background:#ebebeb"></div>
<div class="avt" style="top:878px"><svg width="32" height="32" viewBox="0 0 32 32"><rect width="32" height="32" fill="#fff"/><g fill="#5e4106"><g transform="translate(8 0) rotate(0 4 4)"><path d="M8 1v7L4 4.500z"/></g><g transform="translate(24 8) rotate(90 4 4)"><path d="M8 1v7L4 4.500z"/></g><g transform="translate(16 24) rotate(180 4 4)"><path d="M8 1v7L4 4.500z"/></g><g transform="translate(0 16) rotate(270 4 4)"><path d="M8 1v7L4 4.500z"/></g><g transform="translate(16 0) rotate(0 4 4)"><path d="M.800 8h6.400L3.800 5z"/></g><g transform="translate(24 16) rotate(90 4 4)"><path d="M.800 8h6.400L3.800 5z"/></g><g transform="translate(8 24) rotate(180 4 4)"><path d="M.800 8h6.400L3.800 5z"/></g><g transform="translate(0 8) rotate(270 4 4)"><path d="M.800 8h6.400L3.800 5z"/></g><g transform="translate(8 8) rotate(0 4 4)"><path d="M4 2.2L5.8 4 4 5.8 2.2 4z"/></g><g transform="translate(16 8) rotate(90 4 4)"><path d="M4 2.2L5.8 4 4 5.8 2.2 4z"/></g><g transform="translate(16 16) rotate(180 4 4)"><path d="M4 2.2L5.8 4 4 5.8 2.2 4z"/></g><g transform="translate(8 16) rotate(270 4 4)"><path d="M4 2.2L5.8 4 4 5.8 2.2 4z"/></g></g></svg></div>
<span class="t" id="r9n" style="left:481.45px;top:873.98px;font-size:14.5px;color:#343434;font-weight:bold;letter-spacing:-0.33px">Ross Runolfsdottir</span>
<span class="t" id="r9e" style="left:481.34px;top:894.98px;font-size:14.5px;color:#5e5e5e;letter-spacing:0.07px">karri.effertz@howell.co.uk</span><span class="t" id="r9c" style="left:940.94px;top:884.98px;font-size:14.5px;color:#5e5e5e;letter-spacing:0.41px">2019-08-19</span><span class="t" id="r9l" style="left:1127.78px;top:884.98px;font-size:14.5px;color:#5e5e5e;letter-spacing:-0.04px">Never</span>
</div>
</body>
</html>
